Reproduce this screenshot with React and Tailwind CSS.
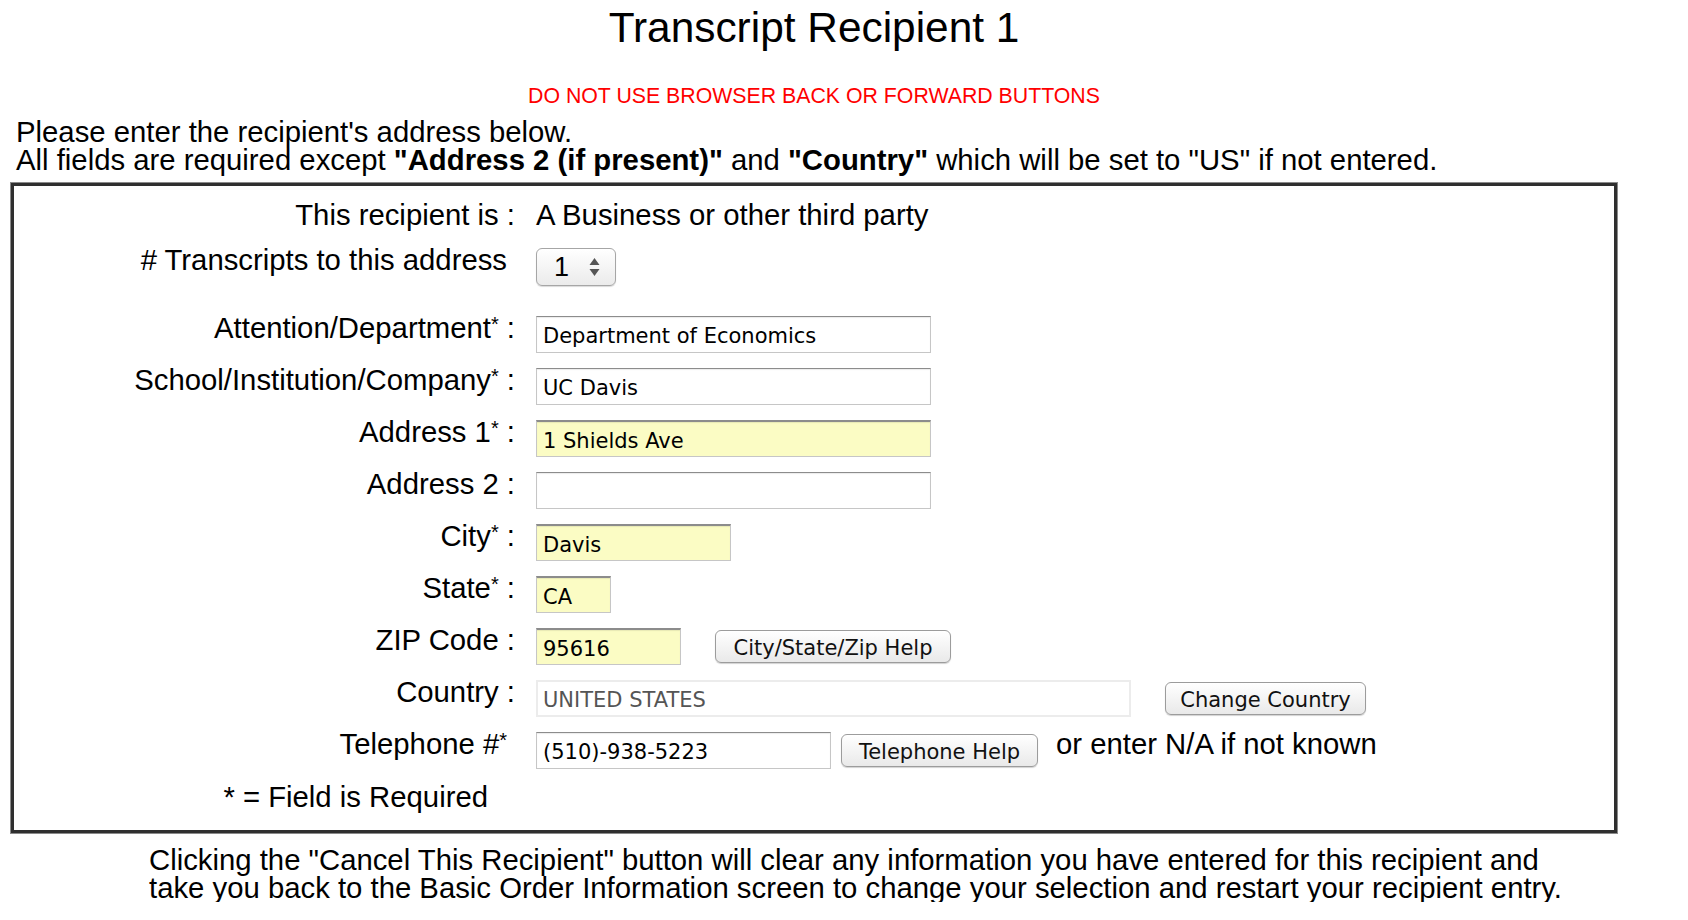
// Transcript recipient address form
const inputBase =
    "h-[37px] border border-[#c6c6c6] border-t-[#8c8c8c] px-[6px] pt-[3px] text-[21px] text-black font-['DejaVu_Sans',sans-serif] outline-none shadow-[inset_0_1px_1px_rgba(0,0,0,0.08)]";

function Star() {
    return <span className="relative -top-[7px] text-[20px] leading-none">*</span>;
}

function Row({ label, noColon, mt, children, labelPad }) {
    return (
        <div className={`flex items-start ${mt}`}>
            <div className={`w-[501px] shrink-0 text-right leading-[24px] whitespace-nowrap ${labelPad || (noColon ? "pr-[8px]" : "")}`}>
                {label}
            </div>
            <div className="ml-[21px] flex items-center leading-[24px]">{children}</div>
        </div>
    );
}

function MacButton({ children, className }) {
    return (
        <button
            type="button"
            className={`${className} block h-[33px] rounded-[6px] border border-[#9c9c9c] bg-gradient-to-b from-white to-[#e9e9e9] pt-[3px] text-[21px] leading-none text-[#111] font-['DejaVu_Sans',sans-serif] shadow-[0_1px_1px_rgba(0,0,0,0.18)]`}
        >
            {children}
        </button>
    );
}

export default function App() {
    return (
        <div className="w-[1628px] bg-white text-black font-['Liberation_Sans',Arial,sans-serif]">
            <h1 className="pt-[4px] text-center text-[42.4px] leading-[48px] font-normal">Transcript Recipient 1</h1>

            <p className="mt-[32px] text-center text-[21.3px] leading-[24px] text-[#ff0000]">
                DO NOT USE BROWSER BACK OR FORWARD BUTTONS
            </p>

            <div className="mt-[10px] pl-[16px] text-[29.3px] leading-[28px] whitespace-nowrap">
                Please enter the recipient's address below.
                <br />
                All fields are required except <b>"Address 2 (if present)"</b> and <b>"Country"</b> which will be set to "US" if not entered.
            </div>

            <div className="mx-[11px] mt-[9px] border-[3px] border-[#2f2f2f] outline outline-1 outline-[#8a8a8a] pt-[17px] pb-[21px] text-[29.3px]">
                <Row label="This recipient is :" mt="">
                    <span>A Business or other third party</span>
                </Row>

                <Row label="# Transcripts to this address" noColon mt="mt-[21px]">
                    <div className="flex h-[38px] w-[80px] items-center rounded-[6px] border border-[#a6a6a6] bg-gradient-to-b from-white to-[#ebebeb] shadow-[0_1px_1px_rgba(0,0,0,0.15)]">
                        <span className="pl-[17px] text-[27px] leading-none">1</span>
                        <svg className="ml-[19px]" width="13" height="22" viewBox="0 0 13 22">
                            <path d="M6.5 2 L11.5 9 L1.5 9 Z" fill="#555" />
                            <path d="M6.5 20 L11.5 13 L1.5 13 Z" fill="#555" />
                        </svg>
                    </div>
                </Row>

                <Row label={<>Attention/Department<Star /> :</>} mt="mt-[30px]">
                    <input readOnly value="Department of Economics" className={`${inputBase} w-[395px] bg-white`} />
                </Row>

                <Row label={<>School/Institution/Company<Star /> :</>} mt="mt-[15px]">
                    <input readOnly value="UC Davis" className={`${inputBase} w-[395px] bg-white`} />
                </Row>

                <Row label={<>Address 1<Star /> :</>} mt="mt-[15px]">
                    <input readOnly value="1 Shields Ave" className={`${inputBase} w-[395px] bg-[#fbfcc4] border-t-2 border-t-[#7e7e7e]`} />
                </Row>

                <Row label="Address 2 :" mt="mt-[15px]">
                    <input readOnly value="" className={`${inputBase} w-[395px] bg-white`} />
                </Row>

                <Row label={<>City<Star /> :</>} mt="mt-[15px]">
                    <input readOnly value="Davis" className={`${inputBase} w-[195px] bg-[#fbfcc4] border-t-2 border-t-[#7e7e7e]`} />
                </Row>

                <Row label={<>State<Star /> :</>} mt="mt-[15px]">
                    <input readOnly value="CA" className={`${inputBase} w-[75px] bg-[#fbfcc4] border-t-2 border-t-[#7e7e7e]`} />
                </Row>

                <Row label="ZIP Code :" mt="mt-[15px]">
                    <input readOnly value="95616" className={`${inputBase} w-[145px] bg-[#fbfcc4] border-t-2 border-t-[#7e7e7e]`} />
                    <MacButton className="ml-[34px] w-[236px]">City/State/Zip Help</MacButton>
                </Row>

                <Row label="Country :" mt="mt-[15px]">
                    <input
                        readOnly
                        value="UNITED STATES"
                        className="h-[37px] w-[595px] border-2 border-[#ececec] bg-white px-[5px] pt-[3px] text-[21px] text-[#555] font-['DejaVu_Sans',sans-serif] outline-none"
                    />
                    <MacButton className="ml-[34px] w-[201px]">Change Country</MacButton>
                </Row>

                <Row label={<>Telephone #<Star /></>} noColon mt="mt-[15px]">
                    <input readOnly value="(510)-938-5223" className={`${inputBase} w-[295px] bg-white`} />
                    <MacButton className="ml-[10px] w-[197px]">Telephone Help</MacButton>
                    <span className="ml-[18px] self-start whitespace-nowrap">or enter N/A if not known</span>
                </Row>

                <Row label="* = Field is Required" labelPad="pr-[27px]" mt="mt-[16px]" />
            </div>

            <div className="mt-[13px] pl-[149px] text-[29.3px] leading-[28px] whitespace-nowrap">
                Clicking the "Cancel This Recipient" button will clear any information you have entered for this recipient and
                <br />
                take you back to the Basic Order Information screen to change your selection and restart your recipient entry.
            </div>
        </div>
    );
}
